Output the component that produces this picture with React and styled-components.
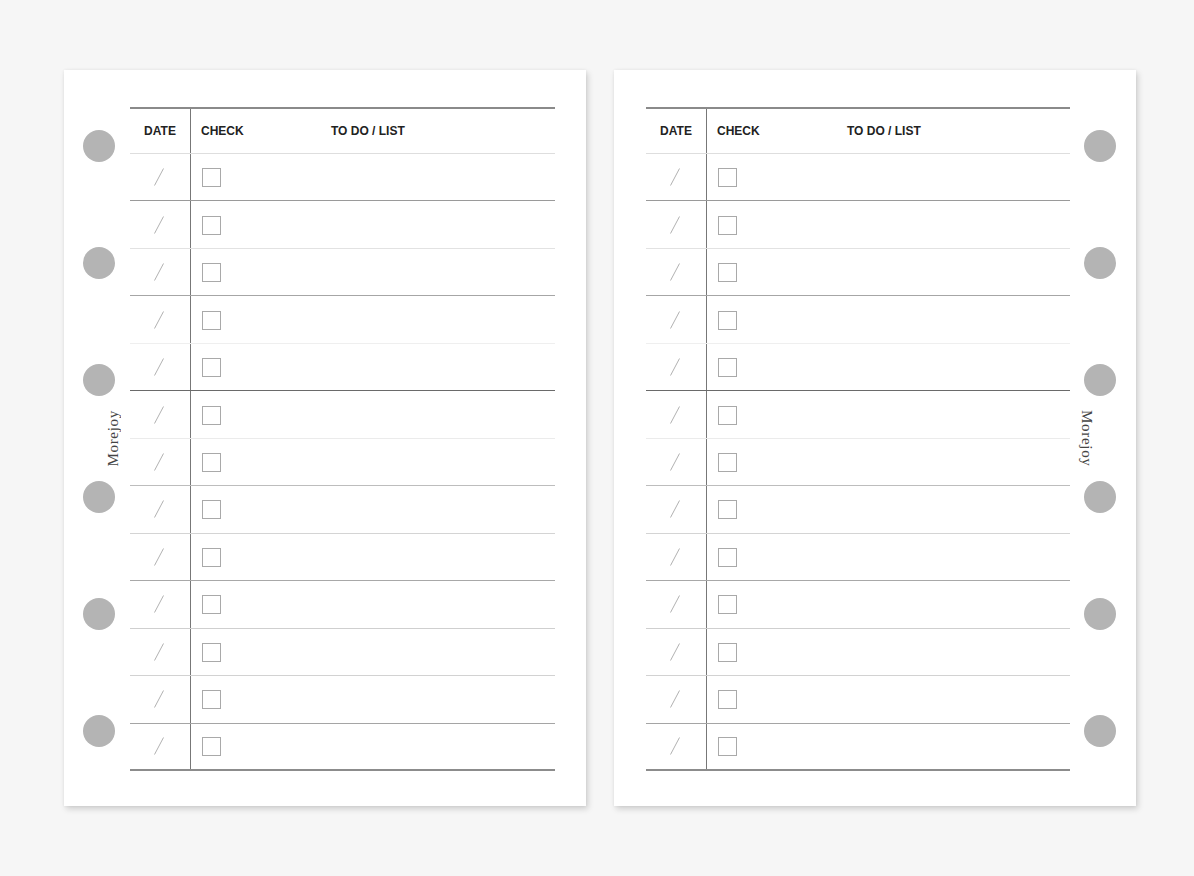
import React from "react";
import styled, { createGlobalStyle } from "styled-components";

const Global = createGlobalStyle`
  html, body { margin: 0; padding: 0; background: #f6f6f6; }
  body { font-family: "Liberation Sans", Arial, sans-serif; }
`;

const Spread = styled.div`
  display: flex;
  gap: 28px;
  padding: 70px 0 0 64px;
  width: 1194px;
  height: 876px;
  box-sizing: border-box;
  background: #f6f6f6;
`;

const Page = styled.div`
  width: 522px;
  height: 736px;
  background: #fff;
  display: flex;
  flex-direction: ${(p) => (p.$side === "left" ? "row" : "row-reverse")};
  box-shadow: 2px 3px 6px rgba(0, 0, 0, 0.16), 0 0 3px rgba(0, 0, 0, 0.06);
  box-sizing: border-box;
  padding: ${(p) => (p.$side === "left" ? "0 31px 0 0" : "0 0 0 32px")};
`;

const Rail = styled.div`
  width: 66px;
  flex: none;
  display: flex;
  flex-direction: column;
  align-items: flex-start;
  box-sizing: border-box;
  padding-top: 60px;
  padding-left: ${(p) => (p.$side === "left" ? "19px" : "14px")};
`;

const Hole = styled.div`
  width: 32px;
  height: 32px;
  border-radius: 50%;
  background: #b4b4b4;
  flex: none;
`;

const Gap = styled.div`
  width: 32px;
  height: 85px;
  flex: none;
  display: flex;
  align-items: center;
  justify-content: center;
`;

const Brand = styled.span`
  font-family: "Liberation Serif", "Times New Roman", serif;
  font-size: 15px;
  letter-spacing: 0.7px;
  color: #444;
  writing-mode: vertical-rl;
  line-height: 1;
  transform: ${(p) => (p.$side === "left" ? "rotate(180deg)" : "none")};
  margin-left: ${(p) => (p.$side === "left" ? "28px" : "0")};
  margin-right: ${(p) => (p.$side === "left" ? "0" : "28px")};
  white-space: nowrap;
`;

const Table = styled.div`
  flex: 1;
  margin: 37px 0 35px;
  display: flex;
  flex-direction: column;
`;

const Header = styled.div`
  height: 47px;
  box-sizing: border-box;
  border-top: 2px solid #8a8a8a;
  border-bottom: 1px solid #dedede;
  display: grid;
  grid-template-columns: 61px 140px 1fr;
`;

const HeadCell = styled.div`
  display: flex;
  align-items: center;
  justify-content: ${(p) => (p.$center ? "center" : "flex-start")};
  padding-left: ${(p) => p.$indent || "0"};
  box-sizing: border-box;
  border-right: ${(p) => (p.$divider ? "1px solid #777" : "none")};
  font-weight: 700;
  font-size: 12px;
  color: #222;
`;

const Body = styled.div`
  flex: 1;
  display: grid;
  grid-template-rows: repeat(13, 1fr);
`;

const Row = styled.div`
  display: grid;
  grid-template-columns: 61px 140px 1fr;
  box-sizing: border-box;
  border-bottom: ${(p) => (p.$last ? "2px" : "1px")} solid ${(p) => p.$line};
`;

const DateCell = styled.div`
  border-right: 1px solid #777;
  display: flex;
  align-items: center;
  justify-content: center;
  padding-right: 3px;
  box-sizing: border-box;
`;

const CheckCell = styled.div`
  display: flex;
  align-items: center;
  padding-left: 11px;
  padding-top: 1px;
`;

const Box = styled.div`
  width: 17px;
  height: 17px;
  border: 1px solid #a9a9a9;
`;

const lines = [
  "#9a9a9a", "#e2e2e2", "#a6a6a6", "#efefef", "#6a6a6a", "#ebebeb",
  "#bdbdbd", "#d4d4d4", "#a8a8a8", "#cfcfcf", "#d2d2d2", "#a5a5a5", "#8c8c8c",
];

const Slash = () => (
  <svg width="12" height="20" viewBox="0 0 12 20">
    <line x1="1.5" y1="18.5" x2="10.5" y2="1.5" stroke="#a8a8a8" strokeWidth="0.9" />
  </svg>
);

const HoleRail = ({ side }) => (
  <Rail $side={side}>
    <Hole />
    <Gap />
    <Hole />
    <Gap />
    <Hole />
    <Gap>
      <Brand $side={side}>Morejoy</Brand>
    </Gap>
    <Hole />
    <Gap />
    <Hole />
    <Gap />
    <Hole />
  </Rail>
);

const Sheet = ({ side }) => (
  <Page $side={side}>
    <HoleRail side={side} />
    <Table>
      <Header>
        <HeadCell $center $divider>DATE</HeadCell>
        <HeadCell $indent="10px">CHECK</HeadCell>
        <HeadCell>TO DO / LIST</HeadCell>
      </Header>
      <Body>
        {lines.map((c, i) => (
          <Row key={i} $line={c} $last={i === lines.length - 1}>
            <DateCell>
              <Slash />
            </DateCell>
            <CheckCell>
              <Box />
            </CheckCell>
            <div />
          </Row>
        ))}
      </Body>
    </Table>
  </Page>
);

export default function App() {
  return (
    <>
      <Global />
      <Spread>
        <Sheet side="left" />
        <Sheet side="right" />
      </Spread>
    </>
  );
}
